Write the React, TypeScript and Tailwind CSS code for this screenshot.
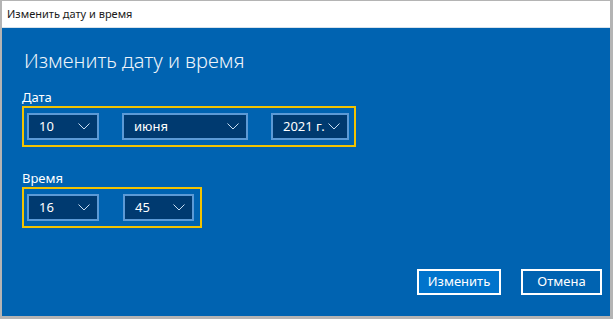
import React from "react";

const font = { fontFamily: '"Noto Sans", "Open Sans", sans-serif' };

function Chevron() {
  return (
    <svg width="12" height="7" viewBox="0 0 12 7" className="shrink-0">
      <path d="M0.5 0.5 L6 6 L11.5 0.5" fill="none" stroke="#c9def2" strokeWidth="1" />
    </svg>
  );
}

function Select({ value, width }: { value: string; width: string }) {
  return (
    <div
      className={`${width} flex h-[27px] items-center justify-between border-2 border-[#5c9ad6] bg-[#003a70] pl-[10px] pr-[7px] text-[13px] leading-none text-white`}
    >
      <span>{value}</span>
      <Chevron />
    </div>
  );
}

export default function App() {
  return (
    <div
      className="flex h-[319px] w-[613px] flex-col bg-[#b4b4b4] pb-[3px] pl-[2px] pr-[3px] pt-px"
      style={font}
    >
      <div className="flex h-[27px] shrink-0 items-center border-b border-[#d6e2ec] bg-white pl-[5px] text-[11px] text-[#1a1a1a]">
        Изменить дату и время
      </div>
      <div className="flex flex-1 flex-col bg-[#0063b1] pl-[20px] pt-[19px] text-white">
        <h1 className="pl-[2px] text-[20px] font-light leading-[27px] text-[#eef4fa]">Изменить дату и время</h1>

        <div className="mt-[14px] text-[13px] leading-[18px]">Дата</div>
        <div className="flex w-[334px] gap-[23px] border-2 border-[#f2c300] px-[3px] py-[5px]">
          <Select value="10" width="w-[72px]" />
          <Select value="июня" width="w-[126px]" />
          <Select value="2021 г." width="w-[78px]" />
        </div>

        <div className="mt-[22px] text-[13px] leading-[18px]">Время</div>
        <div className="flex w-[180px] gap-[24px] border-2 border-[#f2c300] px-[3px] py-[5px]">
          <Select value="16" width="w-[72px]" />
          <Select value="45" width="w-[71px]" />
        </div>

        <div className="mt-auto flex justify-end gap-[20px] pb-[21px] pr-[8px]">
          <button className="flex h-[26px] w-[84px] items-center justify-center border-2 border-white bg-[#0074cc] text-[13px] text-white">
            Изменить
          </button>
          <button className="flex h-[26px] w-[81px] items-center justify-center border-2 border-white bg-[#0063b1] text-[13px] text-white">
            Отмена
          </button>
        </div>
      </div>
    </div>
  );
}
